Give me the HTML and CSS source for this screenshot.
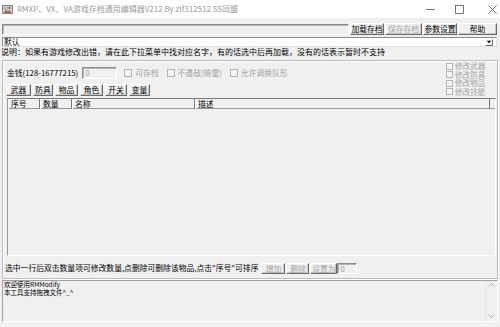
FILE: index.html
```html
<!DOCTYPE html>
<html>
<head>
<meta charset="utf-8">
<link rel="stylesheet" href="styles.css">
</head>
<body>
<div class="titlebar">
  <svg class="appicon" viewBox="0 0 11 11" width="11" height="11">
    <rect x="0.5" y="1.5" width="10" height="8" fill="#d8d4cc" stroke="#8a8680"/>
    <rect x="1.5" y="2.5" width="8" height="3" fill="#a9b9c8"/>
    <path d="M1.5 9 L4 5.5 L6 7.5 L7.5 6 L9.5 9 Z" fill="#9a6a4a"/>
    <circle cx="7.5" cy="3.8" r="0.9" fill="#c84a3a"/>
  </svg>
  <span class="title">RMXP、VX、VA游戏存档通用编辑器V212 By zlf312512 SS同盟</span>
  <div class="caption">
    <svg class="cap-min" viewBox="0 0 9 9" width="9" height="9"><path d="M0 4.5 H9" stroke="#555" stroke-width="0.8"/></svg>
    <svg class="cap-max" viewBox="0 0 9 9" width="9" height="9"><rect x="0.5" y="0.5" width="8" height="8" fill="none" stroke="#555" stroke-width="0.8"/></svg>
    <svg class="cap-close" viewBox="0 0 9 9" width="9" height="9"><path d="M0.5 0.5 L8.5 8.5 M8.5 0.5 L0.5 8.5" stroke="#555" stroke-width="0.8"/></svg>
  </div>
</div>

<div class="toolbar">
  <div class="pathbox"></div>
  <button class="btn w34">加载存档</button>
  <button class="btn w37 dis">保存存档</button>
  <button class="btn w34">参数设置</button>
  <button class="btn w39">帮助</button>
</div>

<div class="combo">
  <span class="combo-text">默认</span>
  <span class="combo-drop"><svg viewBox="0 0 7 4" width="7" height="4"><path d="M1 0.5 H6 L3.5 3.5 Z" fill="#000"/></svg></span>
</div>

<div class="desc">说明：如果有游戏修改出错，请在此下拉菜单中找对应名字，有的话选中后再加载，没有的话表示暂时不支持</div>

<div class="group">
  <div class="top">
    <div class="left">
      <div class="money">
        <span class="money-label">金钱(128-16777215)</span>
        <div class="edit money-edit">0</div>
        <label class="chk first"><span class="box"></span>可存档</label>
        <label class="chk"><span class="box"></span>不遇敌(暗雷)</label>
        <label class="chk"><span class="box"></span>允许调换队形</label>
      </div>
      <div class="tabs">
        <button class="btn tab t25">武器</button>
        <button class="btn tab t20">防具</button>
        <button class="btn tab t23">物品</button>
        <button class="btn tab t23">角色</button>
        <button class="btn tab t22">开关</button>
        <button class="btn tab t21">变量</button>
      </div>
    </div>
    <div class="mods">
      <label class="mod"><span class="box"></span>修改武器</label>
      <label class="mod"><span class="box"></span>修改防具</label>
      <label class="mod"><span class="box"></span>修改物品</label>
      <label class="mod"><span class="box"></span>修改技能</label>
    </div>
  </div>

  <div class="list">
    <div class="lhead">
      <span class="col c1">序号</span>
      <span class="col c2">数量</span>
      <span class="col c3">名称</span>
      <span class="col c4">描述</span>
    </div>
  </div>

  <div class="status">
    <span class="status-text">选中一行后双击数量项可修改数量,点删除可删除该物品,点击"序号"可排序</span>
    <button class="btn dis s24">增加</button>
    <button class="btn dis s23">删除</button>
    <button class="btn dis s27">设置为</button>
    <div class="edit set-edit">0</div>
  </div>
</div>

<div class="log">
  <div class="logtext"><div>欢迎使用RMModify</div><div>本工具支持拖拽文件^_^</div></div>
  <div class="vscroll">
    <svg viewBox="0 0 7 4" width="7" height="4"><path d="M0.5 3.5 L3.5 0.5 L6.5 3.5" fill="none" stroke="#a8a8a8" stroke-width="0.9"/></svg>
    <svg viewBox="0 0 7 4" width="7" height="4"><path d="M0.5 0.5 L3.5 3.5 L6.5 0.5" fill="none" stroke="#a8a8a8" stroke-width="0.9"/></svg>
  </div>
</div>
</body>
</html>
```

FILE: styles.css
```css
* { box-sizing: border-box; }

body {
  margin: 0;
  width: 500px;
  height: 327px;
  overflow: hidden;
  background: #f0f0f0;
  font-family: "Noto Sans CJK SC", "Liberation Sans", sans-serif;
  font-size: 7.8px;
  color: #000;
}

/* ---------- title bar ---------- */
.titlebar {
  height: 18px;
  background: #ffffff;
  display: flex;
  align-items: center;
}
.appicon { margin-left: 2px; flex: none; }
.title {
  margin-left: 4px;
  font-size: 8px;
  line-height: 10px;
  color: #9a9a9a;
  white-space: nowrap;
}
.caption {
  margin-left: auto;
  display: flex;
  align-items: center;
}
.caption svg { display: block; }
.cap-min { margin-right: 20px; }
.cap-max { margin-right: 24px; }
.cap-close { margin-right: 3px; }

/* ---------- buttons ---------- */
.btn {
  font-family: inherit;
  font-size: 7.8px;
  line-height: 10px;
  height: 12px;
  padding: 0;
  margin: 0;
  background: #f0f0f0;
  color: #000;
  border: 1px solid;
  border-color: #ffffff #6a6a6a #6a6a6a #ffffff;
  box-shadow: inset -1px -1px 0 #c8c8c8;
  white-space: nowrap;
  text-align: center;
}
.btn.dis { color: #a3a3a3; }

/* ---------- toolbar ---------- */
.toolbar {
  display: flex;
  gap: 1px;
  height: 12px;
  margin-top: 5px;
  padding-left: 2px;
}
.pathbox {
  width: 347px;
  height: 11px;
  margin-top: 1px;
  background: #f0f0f0;
  border: 1px solid;
  border-color: #8c8c8c #ffffff #ffffff #8c8c8c;
  box-shadow: inset 1px 1px 0 #b4b4b4;
}
.w34 { width: 34px; }
.w37 { width: 37px; }
.w39 { width: 39px; }

/* ---------- combo ---------- */
.combo {
  display: flex;
  align-items: center;
  height: 10px;
  margin: 2px 3px 0 2px;
  background: #ffffff;
  border: 1px solid;
  border-color: #8c8c8c #e0e0e0 #e0e0e0 #8c8c8c;
}
.combo-text { margin-left: 1px; line-height: 8px; }
.combo-drop {
  margin-left: auto;
  margin-right: 3px;
  width: 8px;
  height: 7px;
  display: flex;
  align-items: center;
  justify-content: center;
  background: #f0f0f0;
  border: 1px solid;
  border-color: #ffffff #707070 #707070 #ffffff;
}
.combo-drop svg { display: block; }

/* ---------- description ---------- */
.desc {
  font-size: 8px;
  line-height: 10px;
  height: 10px;
  padding-left: 1px;
  white-space: nowrap;
}

/* ---------- group ---------- */
.group {
  margin: 3px 2px 0 2px;
  height: 219px;
  border: 1px solid #bcbcbc;
  box-shadow: 1px 1px 0 #ffffff, inset 1px 1px 0 #ffffff;
  padding: 0 1px 0 4px;
}
.top {
  display: flex;
  height: 36px;
}
.left { flex: 1; }
.money {
  display: flex;
  align-items: center;
  height: 13px;
  margin-top: 5px;
  white-space: nowrap;
}
.money-label { line-height: 10px; }
.edit {
  height: 12px;
  background: #f0f0f0;
  border: 1px solid;
  border-color: #8c8c8c #ffffff #ffffff #8c8c8c;
  box-shadow: inset 1px 1px 0 #b4b4b4;
  color: #a0a0a0;
  line-height: 10px;
  padding-left: 2px;
  font-size: 7.8px;
}
.money-edit { width: 35px; margin-left: 4px; }
.chk {
  display: flex;
  align-items: center;
  color: #a3a3a3;
  margin-left: 8px;
  line-height: 10px;
}
.chk.first { margin-left: 7px; }
.box {
  width: 8px;
  height: 8px;
  flex: none;
  border: 1px solid #b4b4b4;
  background: #f4f4f4;
  margin-right: 3px;
}
.tabs {
  display: flex;
  gap: 2px;
  margin-top: 5px;
  margin-left: -1px;
}
.t25 { width: 25px; }
.t20 { width: 20px; }
.t23 { width: 23px; }
.t22 { width: 22px; }
.t21 { width: 21px; }

.mods {
  width: 46px;
  margin-right: 4px;
  padding-top: 1px;
  display: flex;
  flex-direction: column;
}
.mod {
  display: flex;
  align-items: center;
  height: 8.5px;
  line-height: 8px;
  font-size: 7.6px;
  color: #a3a3a3;
  white-space: nowrap;
}
.mod .box { margin-right: 2px; width: 7px; height: 7px; }

/* ---------- list ---------- */
.list {
  margin-top: 1px;
  height: 158px;
  border: 1px solid;
  border-color: #7a7a7a #ffffff #ffffff #9a9a9a;
  background: #f0f0f0;
}
.lhead {
  display: flex;
  height: 10px;
  border-bottom: 1px solid #9a9a9a;
}
.col {
  height: 10px;
  line-height: 9px;
  padding-left: 3px;
  border-right: 1px solid #7a7a7a;
  box-shadow: inset 1px 0 0 #ffffff;
  white-space: nowrap;
}
.c1 { width: 32px; }
.c2 { width: 32px; }
.c3 { width: 123px; }
.c4 { width: 295px; }

/* ---------- status ---------- */
.status {
  display: flex;
  align-items: center;
  height: 12px;
  margin-top: 6px;
  margin-left: -2px;
  white-space: nowrap;
}
.status-text { line-height: 10px; margin-right: 3px; }
.status .btn { height: 11px; line-height: 9px; margin-right: 1px; }
.s24 { width: 24px; }
.s23 { width: 23px; }
.s27 { width: 27px; }
.set-edit { width: 20px; height: 11px; margin-left: -1px; line-height: 9px; }

/* ---------- log ---------- */
.log {
  display: flex;
  margin: 1px 2px 0 2px;
  height: 42px;
  border: 1px solid;
  border-color: #a0a0a0 #ffffff #ffffff #a0a0a0;
  background: #f0f0f0;
}
.logtext {
  flex: 1;
  font-size: 6.5px;
  line-height: 7.5px;
  padding-left: 1px;
  white-space: nowrap;
}
.logtext div { height: 7.5px; }
.vscroll {
  width: 12px;
  display: flex;
  flex-direction: column;
  align-items: center;
  justify-content: space-between;
  padding: 2px 0 3px;
  border-left: 1px solid #e8e8e8;
}
.vscroll svg { display: block; }
```
